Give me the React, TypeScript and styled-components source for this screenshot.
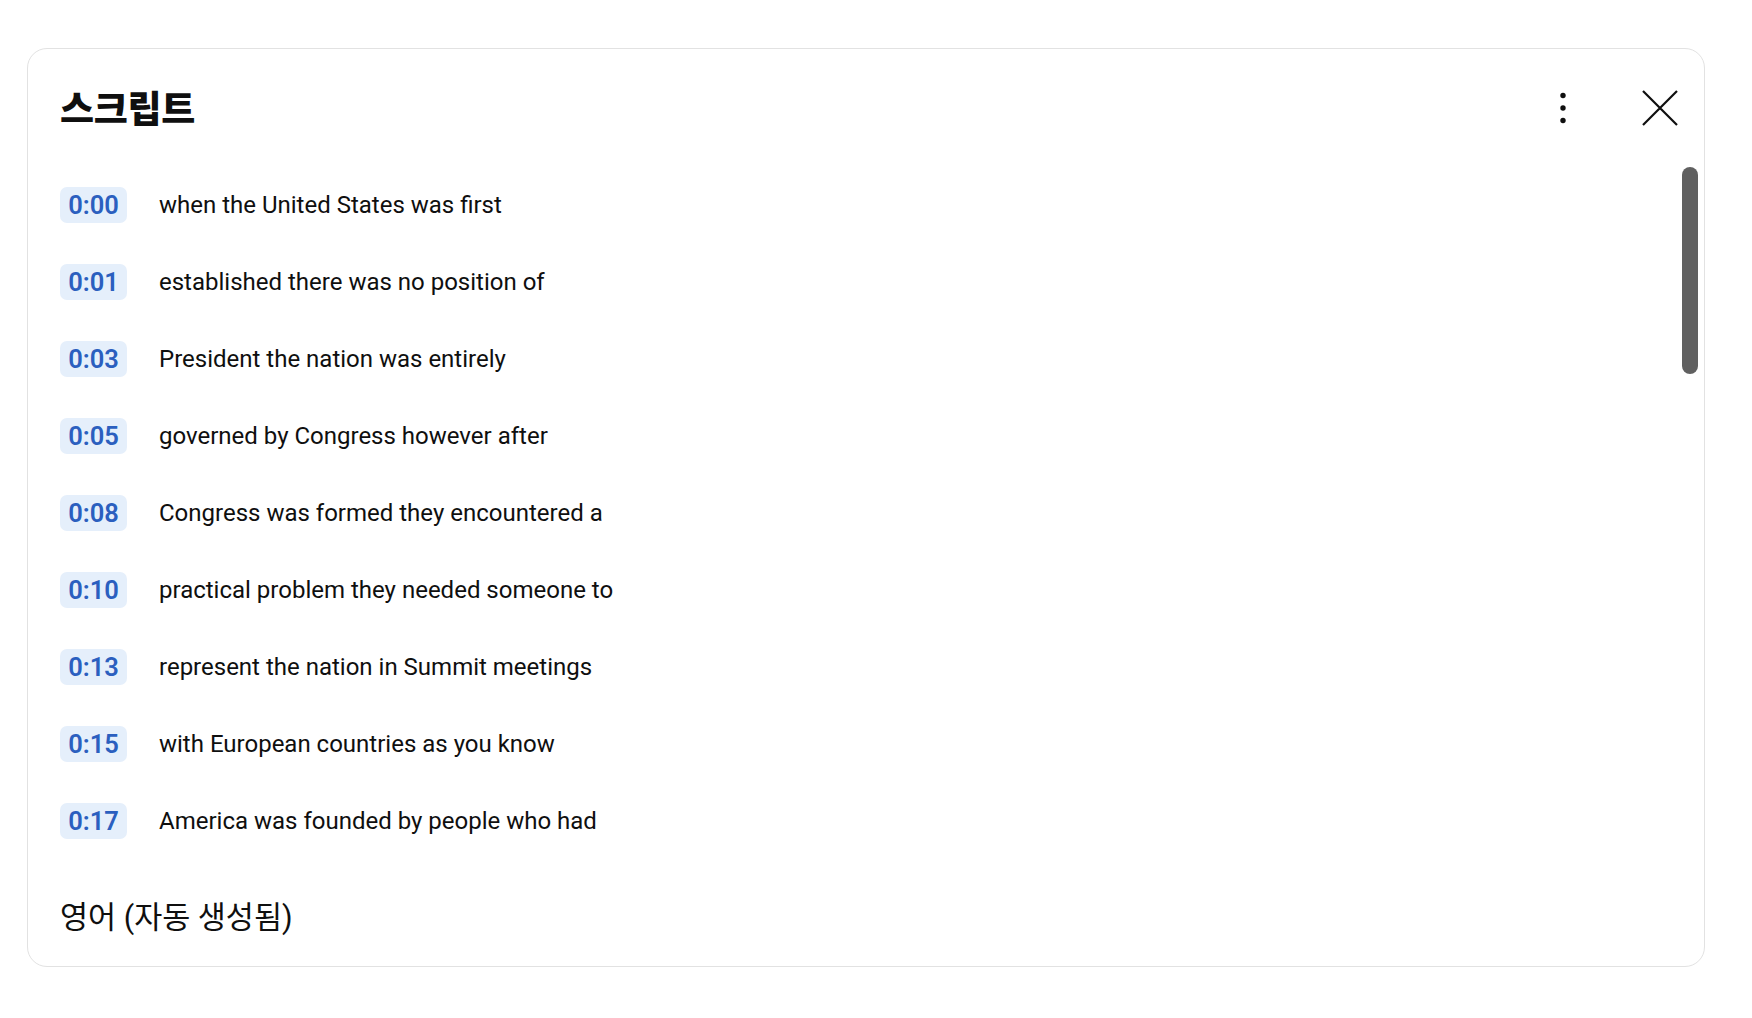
import React from "react";
import styled, { createGlobalStyle } from "styled-components";

const GlobalStyle = createGlobalStyle`
  html, body {
    margin: 0;
    padding: 0;
    background: #ffffff;
  }
  body {
    font-family: Roboto, "Noto Sans CJK KR", "Liberation Sans", sans-serif;
    color: #0f0f0f;
  }
`;

const Page = styled.div`
  width: 1752px;
  height: 1018px;
  padding: 48px 0 0 27px;
  box-sizing: border-box;
`;

const Panel = styled.section`
  width: 1678px;
  height: 919px;
  box-sizing: border-box;
  border: 1.5px solid #e2e2e2;
  border-radius: 20px;
  display: flex;
  flex-direction: column;
  overflow: hidden;
  background: #fff;
`;

const Header = styled.header`
  height: 117px;
  flex: none;
  display: flex;
  align-items: center;
  padding: 0 20px 0 32px;
  box-sizing: border-box;
`;

const Title = styled.h2`
  margin: 0;
  flex: 1;
  font-family: "Noto Sans CJK KR", sans-serif;
  font-weight: 900;
  font-size: 37px;
  letter-spacing: -0.3px;
  line-height: 1;
  color: #0f0f0f;
`;

const IconButton = styled.button`
  width: 48px;
  height: 48px;
  border: none;
  background: transparent;
  padding: 0;
  display: flex;
  align-items: center;
  justify-content: center;
  color: #0f0f0f;
  cursor: pointer;
`;

const HeaderActions = styled.div`
  display: flex;
  align-items: center;
  gap: 49px;
`;

const Body = styled.div`
  flex: 1;
  display: flex;
  min-height: 0;
`;

const List = styled.ul`
  list-style: none;
  margin: 0;
  padding: 0;
  flex: 1;
`;

const Row = styled.li`
  height: 77px;
  display: flex;
  align-items: center;
  padding-left: 32px;
  gap: 32px;
`;

const Stamp = styled.span`
  width: 67px;
  height: 36px;
  border-radius: 7px;
  background: #e5effb;
  color: #2b5fbf;
  font-family: Roboto, sans-serif;
  font-weight: 600;
  font-size: 25.5px;
  display: flex;
  align-items: center;
  justify-content: center;
  flex: none;
`;

const Segment = styled.span`
  font-family: Roboto, sans-serif;
  font-size: 24px;
  color: #0f0f0f;
`;

const Track = styled.div`
  width: 16px;
  margin-right: 6px;
  padding-top: 1px;
  flex: none;
`;

const Thumb = styled.div`
  width: 16px;
  height: 207px;
  border-radius: 8px;
  background: #606060;
`;

const Footer = styled.footer`
  height: 108px;
  flex: none;
  display: flex;
  align-items: center;
  padding: 6px 32px 0;
  box-sizing: border-box;
  font-family: Roboto, "Noto Sans CJK KR", sans-serif;
  font-size: 30.5px;
  color: #0f0f0f;
`;

const lines: [string, string][] = [
  ["0:00", "when the United States was first"],
  ["0:01", "established there was no position of"],
  ["0:03", "President the nation was entirely"],
  ["0:05", "governed by Congress however after"],
  ["0:08", "Congress was formed they encountered a"],
  ["0:10", "practical problem they needed someone to"],
  ["0:13", "represent the nation in Summit meetings"],
  ["0:15", "with European countries as you know"],
  ["0:17", "America was founded by people who had"],
];

const MoreIcon = () => (
  <svg width="10" height="34" viewBox="0 0 10 34">
    <circle cx="5" cy="4.5" r="2.7" fill="currentColor" />
    <circle cx="5" cy="17" r="2.7" fill="currentColor" />
    <circle cx="5" cy="29.5" r="2.7" fill="currentColor" />
  </svg>
);

const CloseIcon = () => (
  <svg width="36" height="36" viewBox="0 0 36 36">
    <path d="M1 1 L35 35 M35 1 L1 35" stroke="currentColor" strokeWidth="2.2" fill="none" />
  </svg>
);

export default function App() {
  return (
    <>
      <GlobalStyle />
      <Page>
        <Panel>
          <Header>
            <Title>스크립트</Title>
            <HeaderActions>
              <IconButton aria-label="더보기">
                <MoreIcon />
              </IconButton>
              <IconButton aria-label="닫기">
                <CloseIcon />
              </IconButton>
            </HeaderActions>
          </Header>
          <Body>
            <List>
              {lines.map(([t, s]) => (
                <Row key={t}>
                  <Stamp>{t}</Stamp>
                  <Segment>{s}</Segment>
                </Row>
              ))}
            </List>
            <Track>
              <Thumb />
            </Track>
          </Body>
          <Footer>영어 (자동 생성됨)</Footer>
        </Panel>
      </Page>
    </>
  );
}
